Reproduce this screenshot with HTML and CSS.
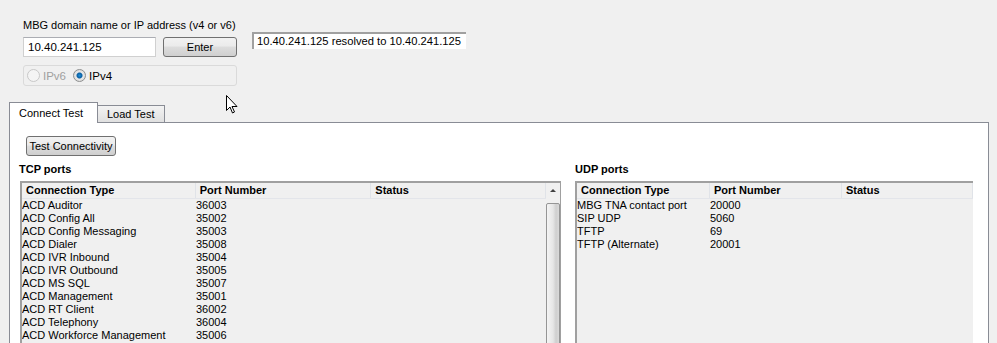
FILE: index.html
```html
<!DOCTYPE html>
<html lang="en">
<head>
  <meta charset="utf-8" />
  <title>MBG Port Test</title>
  <link rel="stylesheet" href="styles.css">
</head>
<body>
  <header class="top">
    <div class="target">
      <div class="caption">MBG domain name or IP address (v4 or v6)</div>
      <div class="entry">
        <div class="field">10.40.241.125</div>
        <button class="btn enter">Enter</button>
      </div>
      <div class="radios">
        <span class="radio off"></span><span class="dim">IPv6</span>
        <span class="radio on"></span><span>IPv4</span>
      </div>
    </div>
    <div class="result">10.40.241.125 resolved to 10.40.241.125</div>
  </header>

  <nav class="tabs">
    <span class="tab active">Connect Test</span>
    <span class="tab">Load Test</span>
  </nav>

  <main class="panel">
    <button class="btn test">Test Connectivity</button>
    <div class="groups">
      <section class="group tcp">
        <h2>TCP ports</h2>
        <div class="grid">
          <div class="head">
            <span class="c1">Connection Type</span><span class="c2">Port Number</span><span class="c3">Status</span>
          </div>
          <div class="rows">
            <div class="row"><span class="c1">ACD Auditor</span><span class="c2">36003</span></div>
            <div class="row"><span class="c1">ACD Config All</span><span class="c2">35002</span></div>
            <div class="row"><span class="c1">ACD Config Messaging</span><span class="c2">35003</span></div>
            <div class="row"><span class="c1">ACD Dialer</span><span class="c2">35008</span></div>
            <div class="row"><span class="c1">ACD IVR Inbound</span><span class="c2">35004</span></div>
            <div class="row"><span class="c1">ACD IVR Outbound</span><span class="c2">35005</span></div>
            <div class="row"><span class="c1">ACD MS SQL</span><span class="c2">35007</span></div>
            <div class="row"><span class="c1">ACD Management</span><span class="c2">35001</span></div>
            <div class="row"><span class="c1">ACD RT Client</span><span class="c2">36002</span></div>
            <div class="row"><span class="c1">ACD Telephony</span><span class="c2">36004</span></div>
            <div class="row"><span class="c1">ACD Workforce Management</span><span class="c2">35006</span></div>
          </div>
          <div class="scroll">
            <div class="arrow"></div>
            <div class="thumb"></div>
          </div>
        </div>
      </section>
      <section class="group udp">
        <h2>UDP ports</h2>
        <div class="grid">
          <div class="head">
            <span class="c1">Connection Type</span><span class="c2">Port Number</span><span class="c3">Status</span>
          </div>
          <div class="rows">
            <div class="row"><span class="c1">MBG TNA contact port</span><span class="c2">20000</span></div>
            <div class="row"><span class="c1">SIP UDP</span><span class="c2">5060</span></div>
            <div class="row"><span class="c1">TFTP</span><span class="c2">69</span></div>
            <div class="row"><span class="c1">TFTP (Alternate)</span><span class="c2">20001</span></div>
          </div>
        </div>
      </section>
    </div>
  </main>

  <svg class="cursor" width="12" height="20" viewBox="0 0 12 20">
    <path d="M0.5 0.5 L0.5 15.5 L4 12 L6.5 18 L8.5 17 L6 11.5 L11 11.5 Z" fill="#fff" stroke="#000" stroke-width="1"/>
  </svg>
</body>
</html>
```

FILE: styles.css
```css
* {
  box-sizing: border-box;
}

body {
  margin: 0;
  background: #F0F0F0;
  font-family: "Liberation Sans", Arial, sans-serif;
  font-size: 11px;
  color: #000;
  height: 343px;
  overflow: hidden;
  position: relative;
}

.top {
  display: flex;
  align-items: flex-start;
  padding: 19px 0 0 23px;
  height: 101px;
}

.target {
  width: 214px;
}

.caption {
  height: 18px;
  line-height: 13px;
}

.entry {
  display: flex;
  justify-content: space-between;
  height: 20px;
}

.field {
  width: 133px;
  background: #fff;
  border: 1px solid #D0D0D0;
  border-top-color: #ABADB3;
  line-height: 18px;
  padding-left: 4px;
  font-size: 11.5px;
}

.btn {
  font: inherit;
  color: #000;
  border: 1px solid #707070;
  border-radius: 3px;
  background: linear-gradient(#F2F2F2, #EBEBEB 45%, #DDDDDD 50%, #CFCFCF);
  padding: 0;
}

.enter {
  width: 74px;
}

.radios {
  margin-top: 8px;
  height: 21px;
  border: 1px solid #DADADA;
  border-radius: 3px;
  display: flex;
  align-items: center;
  padding-left: 3px;
  gap: 3px;
  font-size: 11.5px;
}

.radio {
  width: 13px;
  height: 13px;
  border-radius: 50%;
  border: 1px solid #8E8F8F;
  background: radial-gradient(#F4F4F4, #D8D8D8);
}

.radio.off {
  border-color: #C8C8C8;
  background: #F4F4F4;
}

.radio.on {
  background: radial-gradient(circle, #1F8FD8 0, #0B5FA2 2.5px, #E8E8E8 3.5px, #D0D0D0);
  margin-left: 4px;
}

.dim {
  color: #A0A0A0;
}

.result {
  margin: 13px 0 0 15px;
  width: 214px;
  height: 17px;
  background: #fff;
  border-top: 2px solid #A0A0A0;
  border-left: 2px solid #A0A0A0;
  line-height: 14px;
  padding-left: 3px;
  white-space: nowrap;
  font-size: 11.2px;
}

.tabs {
  display: flex;
  align-items: flex-end;
  padding-left: 9px;
  height: 21px;
}

.tab {
  height: 17px;
  border: 1px solid #898C95;
  border-bottom: 0;
  border-left: 0;
  background: linear-gradient(#F3F3F3, #E0E0E0);
  padding: 0 9px;
  line-height: 16px;
}

.tab.active {
  height: 21px;
  width: 89px;
  border-left: 1px solid #898C95;
  background: #fff;
  padding-left: 9px;
  line-height: 20px;
  position: relative;
  top: 1px;
}

.panel {
  margin-left: 9px;
  width: 980px;
  height: 222px;
  background: #fff;
  border: 1px solid #898C95;
  border-bottom: 0;
  padding: 13px 0 0 16px;
}

.test {
  width: 90px;
  height: 20px;
  border-radius: 3px;
}

.groups {
  display: flex;
  margin-top: 7px;
  margin-left: -7px;
}

.group h2 {
  font-size: 11px;
  font-weight: bold;
  margin: 0 0 5px;
  height: 13px;
  line-height: 13px;
}

.tcp {
  width: 556px;
}

.tcp .grid {
  margin-left: 1px;
  width: 541px;
  padding-right: 15px;
}

.udp .grid {
  width: 398px;
}

.grid {
  height: 163px;
  background: #F0F0F0;
  border-top: 2px solid #A0A0A0;
  border-left: 2px solid #A0A0A0;
  position: relative;
  overflow: hidden;
}

.head {
  display: flex;
  height: 16px;
  border-bottom: 1px solid #E3E5EA;
  font-weight: bold;
  line-height: 15px;
}

.head span {
  border-right: 1px solid #E0E3E8;
  padding-left: 4px;
}

.row {
  display: flex;
  height: 13px;
  line-height: 13px;
}

.tcp .c1 { width: 174px; }
.tcp .c2 { width: 176px; }
.tcp .c3 { width: 175px; }

.udp .c1 { width: 133px; }
.udp .c2 { width: 132px; }
.udp .c3 { width: 131px; }

.scroll {
  position: absolute;
  top: 0;
  right: 0;
  width: 15px;
  bottom: 0;
  background: #F0F0F0;
  border-right: 1px solid #A0A0A0;
}

.arrow {
  height: 17px;
  position: relative;
}

.arrow::after {
  content: "";
  position: absolute;
  left: 4px;
  top: 6px;
  border: 3px solid transparent;
  border-bottom: 3px solid #404040;
  border-top: 0;
}

.thumb {
  margin-top: 3px;
  height: 200px;
  border: 1px solid #959595;
  border-radius: 2px;
  background: linear-gradient(90deg, #F4F4F4, #E6E6E6 50%, #CFCFCF 75%, #D9D9D9);
}

.cursor {
  position: absolute;
  left: 226px;
  top: 95px;
}
```
